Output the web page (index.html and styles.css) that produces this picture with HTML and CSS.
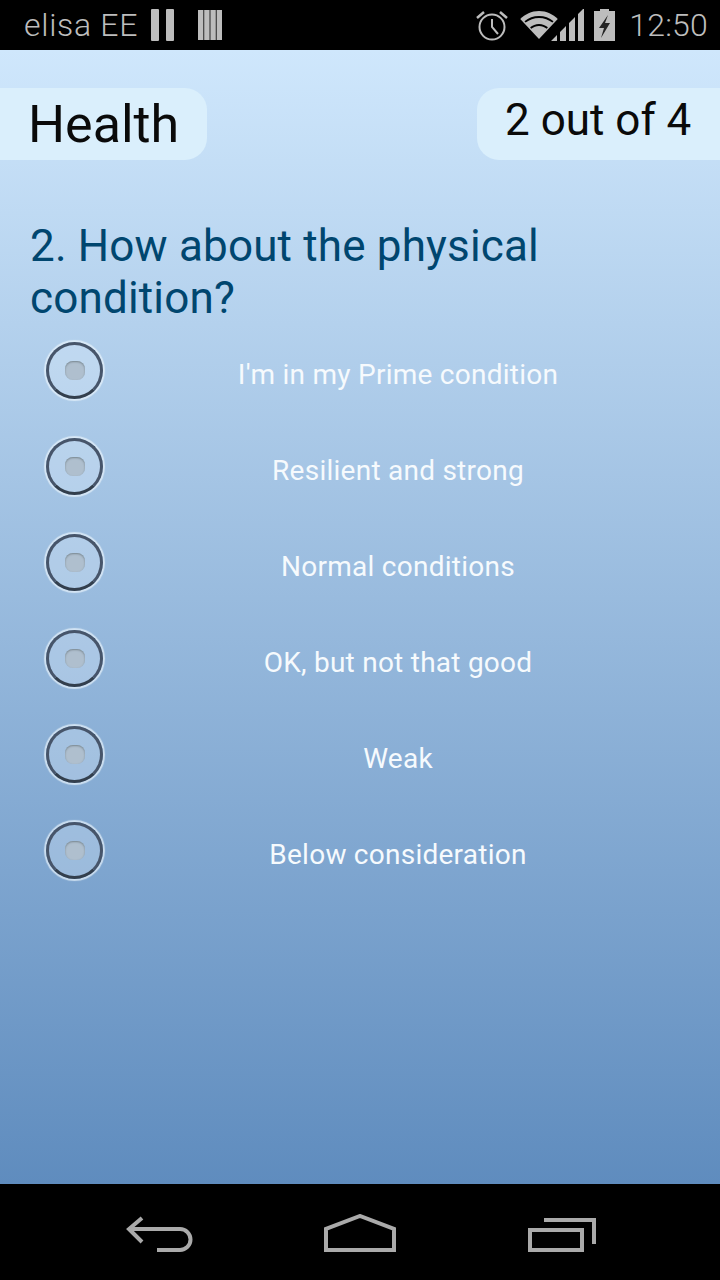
FILE: index.html
```html
<!DOCTYPE html>
<html lang="en">
<head>
  <meta charset="UTF-8">
  <title>Health</title>
  <link rel="stylesheet" href="styles.css">
</head>
<body>

<div class="status-bar">
  <div class="status-left">
    <span class="carrier">elisa EE</span>
    <svg class="ic-pause" width="23" height="32" viewBox="0 0 23 32"><rect x="0" y="0" width="8" height="32" rx="1" fill="#bdbdbd"/><rect x="15" y="0" width="8" height="32" rx="1" fill="#bdbdbd"/></svg>
    <svg class="ic-bars" width="24" height="30" viewBox="0 0 24 30"><path d="M0 0h5.400v30H0zM6.200 0h5.400v30H6.200zM12.400 0h5.400v30h-5.400zM18.600 0H24v30h-5.400z" fill="#bdbdbd"/></svg>
  </div>
  <div class="status-right">
    <svg width="32" height="32" viewBox="0 0 32 32" fill="none" stroke="#bdbdbd"><circle cx="16" cy="18" r="12.500" stroke-width="2"/><path d="M16 10v8l6 7" stroke-width="2"/><path d="M1 9l7-6M31 9l-7-6" stroke-width="2.500"/></svg>
    <svg class="ic-wifi" width="38" height="30" viewBox="0 0 40 32"><path d="M0 9.500C5 4.500 12 1 20 1s15 3.500 20 8.500L20 31z" fill="#bdbdbd"/><path d="M4.500 12C9 8.500 14 6.500 20 6.500S31 8.500 35.500 12l-1.200 1.400C30 10.300 25.500 8.500 20 8.500s-10 1.800-14.300 4.900zM10.500 18.500C13 16.500 16.500 15 20 15s7 1.500 9.500 3.500L28.300 20C26 18.300 23 17 20 17s-6 1.300-8.300 3z" fill="#000"/></svg>
    <svg class="ic-signal" width="33" height="32" viewBox="0 0 33 32"><path d="M0 32l6-6v6zM9 32V23l6-6v15zM18 32V14l6-6v24zM27 32V5l6-6v33z" fill="#bdbdbd"/></svg>
    <svg class="ic-batt" width="21" height="32" viewBox="0 0 21 32"><path d="M6 0h9v2h6v30H0V2h6z" fill="#bdbdbd"/><path d="M14 6L5 19h5l-3 10 9-15h-5z" fill="#222"/></svg>
    <span class="clock">12:50</span>
  </div>
</div>

<div class="screen">
  <div class="top-row">
    <div class="pill pill-left">Health</div>
    <div class="pill pill-right">2 out of 4</div>
  </div>

  <h2 class="question">2. How about the physical condition?</h2>

  <div class="options">
    <div class="option"><span class="radio"><span class="dot"></span></span><span class="label">I'm in my Prime condition</span></div>
    <div class="option"><span class="radio"><span class="dot"></span></span><span class="label">Resilient and strong</span></div>
    <div class="option"><span class="radio"><span class="dot"></span></span><span class="label">Normal conditions</span></div>
    <div class="option"><span class="radio"><span class="dot"></span></span><span class="label">OK, but not that good</span></div>
    <div class="option"><span class="radio"><span class="dot"></span></span><span class="label">Weak</span></div>
    <div class="option"><span class="radio"><span class="dot"></span></span><span class="label">Below consideration</span></div>
  </div>
</div>

<div class="nav-bar">
  <svg width="68" height="38" viewBox="0 0 68 38" fill="none" stroke="#aaa" stroke-width="4"><path d="M16 4L3 15l13 13"/><path d="M3 15h51a10.500 10.500 0 0 1 0 21H31"/></svg>
  <svg class="ic-home" width="72" height="38" viewBox="0 0 72 38" fill="none" stroke="#aaa" stroke-width="4"><path d="M2 36V15L36 2l34 13v21z"/></svg>
  <svg class="ic-recent" width="68" height="34" viewBox="0 0 68 34" fill="none" stroke="#aaa" stroke-width="4"><path d="M2 12h52v20H2z"/><path d="M16 2h50v24"/></svg>
</div>

</body>
</html>
```

FILE: styles.css
```css
* {
  box-sizing: border-box;
}

body {
  margin: 0;
  width: 720px;
  height: 1280px;
  display: flex;
  flex-direction: column;
  background-color: #000;
  font-family: Roboto, "Liberation Sans", sans-serif;
  overflow: hidden;
}

.status-bar {
  height: 50px;
  flex-shrink: 0;
  display: flex;
  justify-content: space-between;
  align-items: center;
  padding: 0 12px 0 24px;
  color: #bdbdbd;
}

.status-left,
.status-right {
  display: flex;
  align-items: center;
}

.carrier {
  font-size: 32px;
  font-weight: 300;
  letter-spacing: 0.7px;
  margin-right: 13px;
}

.ic-pause {
  margin-right: 24px;
}

.status-right svg {
  margin-right: 5px;
}

.status-right .ic-wifi {
  margin-left: 7px;
  margin-right: -7px;
}

.status-right .ic-batt {
  margin-left: 5px;
}

.clock {
  font-size: 32px;
  font-weight: 300;
  letter-spacing: 0.2px;
  margin-left: 9px;
}

.screen {
  flex: 1;
  background: linear-gradient(to bottom, #cfe7fc 0%, #5f8cbe 100%);
  padding-top: 38px;
}

.top-row {
  display: flex;
  justify-content: space-between;
}

.pill {
  height: 72px;
  background-color: #daeffc;
  color: #0a0a0a;
}

.pill-left {
  width: 207px;
  padding-left: 28px;
  border-radius: 0 22px 22px 0;
  font-size: 52px;
  line-height: 74px;
}

.pill-right {
  width: 243px;
  padding-left: 28px;
  border-radius: 22px 0 0 22px;
  font-size: 44px;
  line-height: 64px;
}

.question {
  margin: 60px 0 0;
  padding: 0 120px 0 30px;
  font-size: 44px;
  font-weight: 400;
  letter-spacing: 0.17px;
  line-height: 52px;
  color: #00466f;
}

.options {
  display: flex;
  flex-direction: column;
  gap: 36px;
  margin-top: 16px;
  padding-left: 46px;
}

.option {
  display: flex;
  align-items: center;
  height: 60px;
}

.radio {
  width: 57px;
  height: 57px;
  flex-shrink: 0;
  display: flex;
  justify-content: center;
  align-items: center;
  border-radius: 50%;
  background-color: rgba(225, 240, 252, 0.3);
  border: 3px solid #47556a;
  border-bottom-color: #333f4d;
  box-shadow: 0 0 1px 2px rgba(235, 245, 252, 0.7);
}

.dot {
  width: 20px;
  height: 19px;
  border-radius: 8px;
  background-color: #afbfce;
  box-shadow: inset 0 1px 2px #77868f;
}

.label {
  width: 590px;
  text-align: center;
  padding-top: 8px;
  font-size: 28px;
  letter-spacing: 0.25px;
  color: #f6fafd;
}

.nav-bar {
  height: 96px;
  flex-shrink: 0;
  display: flex;
  justify-content: space-between;
  align-items: center;
  padding: 2px 124px 0 126px;
}

.ic-home {
  margin-right: 2px;
}

.ic-recent {
  margin-top: 4px;
}
```
